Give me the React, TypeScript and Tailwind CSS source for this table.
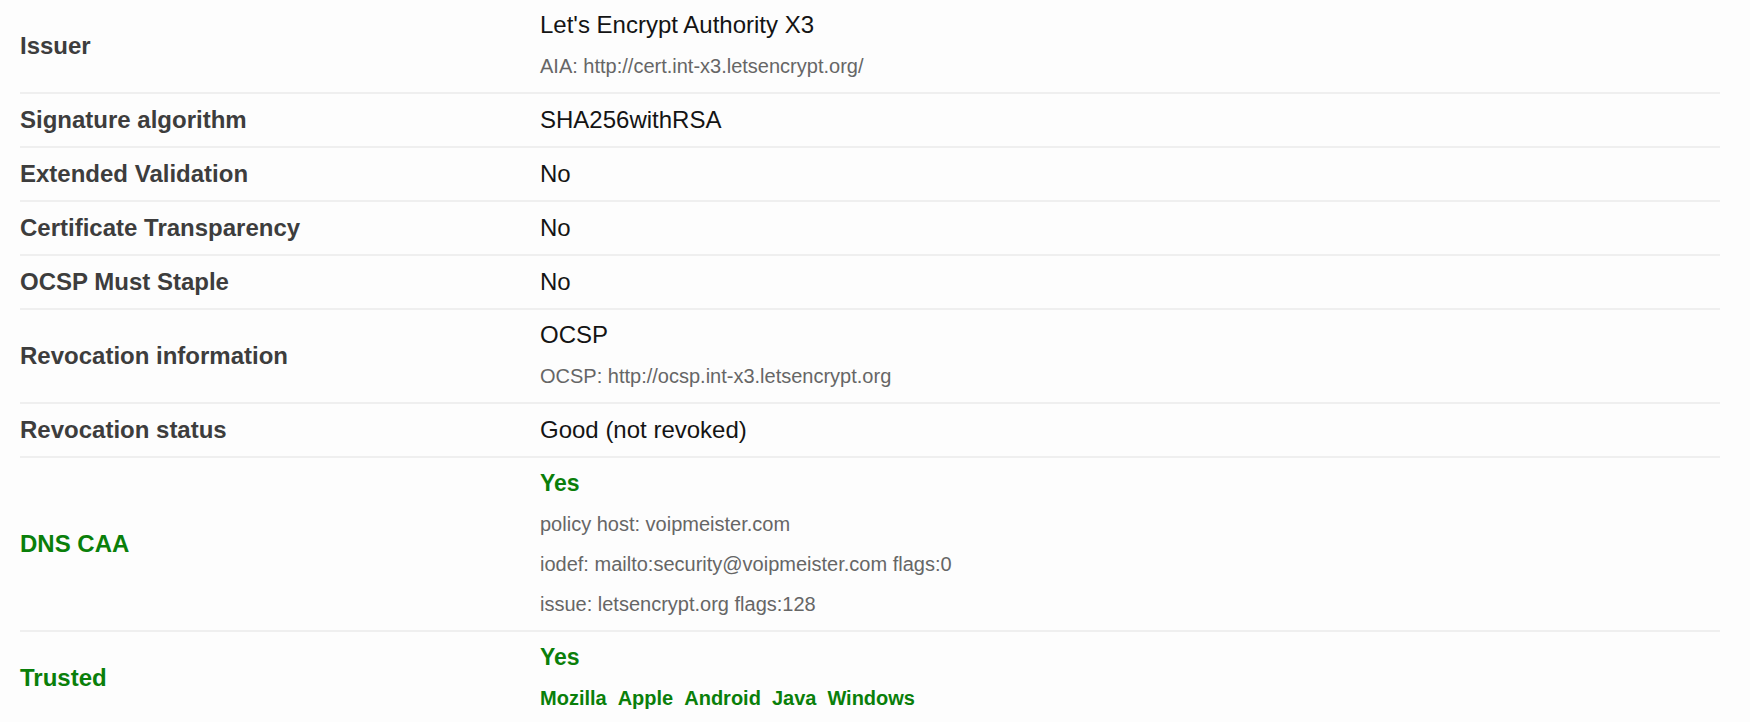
import React from "react";

const font = { fontFamily: '"Liberation Sans", Arial, Helvetica, sans-serif' };

type Row = {
  label: string;
  green?: boolean;
  main: string;
  mainGreen?: boolean;
  subs?: string[];
  links?: string[];
};

const rows: Row[] = [
  { label: "Issuer", main: "Let's Encrypt Authority X3", subs: ["AIA: http://cert.int-x3.letsencrypt.org/"] },
  { label: "Signature algorithm", main: "SHA256withRSA" },
  { label: "Extended Validation", main: "No" },
  { label: "Certificate Transparency", main: "No" },
  { label: "OCSP Must Staple", main: "No" },
  { label: "Revocation information", main: "OCSP", subs: ["OCSP: http://ocsp.int-x3.letsencrypt.org"] },
  { label: "Revocation status", main: "Good (not revoked)" },
  {
    label: "DNS CAA",
    green: true,
    main: "Yes",
    mainGreen: true,
    subs: [
      "policy host: voipmeister.com",
      "iodef: mailto:security@voipmeister.com flags:0",
      "issue: letsencrypt.org flags:128",
    ],
  },
  {
    label: "Trusted",
    green: true,
    main: "Yes",
    mainGreen: true,
    links: ["Mozilla", "Apple", "Android", "Java", "Windows"],
  },
];

export default function App() {
  return (
    <div className="min-h-screen bg-[#fdfdfd] pl-[20px]" style={font}>
      <div className="w-[1700px]">
        {rows.map((r) => {
          const multi = (r.subs && r.subs.length > 0) || (r.links && r.links.length > 0);
          return (
            <div key={r.label} className="flex border-b-2 border-[#efefef]">
              <div
                className={
                  "w-[520px] shrink-0 flex items-center text-[24px] font-bold " +
                  (r.green ? "text-[#0a7f0a]" : "text-[#3d3d3d]")
                }
              >
                {r.label}
              </div>
              <div className={"flex-1 " + (multi ? "pt-[8px] pb-[6px]" : "py-[9px]")}>
                <div
                  className={
                    "leading-[34px] " +
                    (r.mainGreen
                      ? "text-[23px] font-bold text-[#0a7f0a]"
                      : "text-[24px] text-[#141414]")
                  }
                >
                  {r.main}
                </div>
                {multi && (
                  <div className="mt-[4px]">
                    {r.subs?.map((s) => (
                      <div key={s} className="text-[20px] leading-[40px] text-[#666666]">
                        {s}
                      </div>
                    ))}
                    {r.links && (
                      <div className="flex gap-[11px] text-[20px] leading-[40px] font-bold text-[#0a7f0a]">
                        {r.links.map((l) => (
                          <span key={l}>{l}</span>
                        ))}
                      </div>
                    )}
                  </div>
                )}
              </div>
            </div>
          );
        })}
      </div>
    </div>
  );
}
